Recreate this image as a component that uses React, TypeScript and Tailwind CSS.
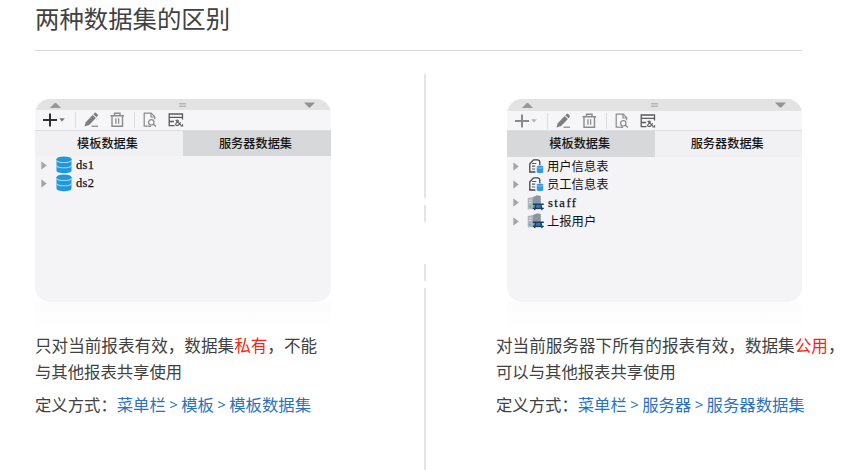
import React from "react";

const Plus = ({ muted }: { muted: boolean }) => (
  <svg width="16" height="16" viewBox="0 0 16 16" className={muted ? "text-[#8a8a8c]" : "text-[#303030]"}>
    <path d="M8 1.5V14.5M1 8H15" stroke="currentColor" strokeWidth="2" fill="none" />
  </svg>
);

const Caret = ({ muted }: { muted: boolean }) => (
  <svg width="6" height="4" viewBox="0 0 6 4" className={muted ? "text-[#b5b5b7]" : "text-[#77777a]"}>
    <path d="M0.3 0.3H5.7L3 3.8Z" fill="currentColor" />
  </svg>
);

const Pencil = () => (
  <svg width="15" height="16" viewBox="0 0 15 16">
    <path d="M0.5 14.4L1.8 10.2L8.6 3L11.9 5.9L5.2 13Z" fill="#7e7e80" />
    <path d="M9.3 2.2L10.5 0.9Q11.3 0.3 12.1 1L13.6 2.4Q14.3 3.1 13.7 3.9L12.6 5.2Z" fill="#7e7e80" />
    <path d="M7.5 14.2H14" stroke="#9a9a9c" strokeWidth="1.5" />
  </svg>
);

const Trash = () => (
  <svg width="15" height="16" viewBox="0 0 15 16" fill="none" stroke="#8b8b8d">
    <path d="M0.5 3.7H14M4.5 3.4V1.3H10V3.4M2 3.8V14.3H12.5V3.8" strokeWidth="1.4" />
    <path d="M5.9 6.2V11.8M8.6 6.2V11.8" strokeWidth="1.3" />
  </svg>
);

const Preview = () => (
  <svg width="14" height="16" viewBox="0 0 14 16" fill="none" stroke="#8b8b8d" strokeWidth="1.2">
    <path d="M5.4 14.2H1.2V1.2H8.2L11.7 4.7V7.2M8 1.4V5H11.7" />
    <circle cx="8.3" cy="10.3" r="2.7" />
    <path d="M10.3 12.3L12.9 14.6M5.5 14.2H8" strokeWidth="1.4" />
  </svg>
);

const TableEdit = () => (
  <svg width="16" height="16" viewBox="0 0 16 16" fill="none" stroke="#5a5a5c" strokeWidth="1.3">
    <path d="M6.6 13.6H1.2V2H14.5V7.5M1.2 5.3H14.5M1.2 9.5H6" />
    <path d="M7.6 8.2L13.2 13.4M7.8 13.2C6.9 11.6 8.4 10.8 10.2 9.6C10.8 8.6 9.4 7.4 8.4 8.4M8 13.2C9.6 14.2 11.8 12.6 12.6 10.2" strokeWidth="1.1" />
    <path d="M12.2 14.6H15.1V11.8Z" fill="#5a5a5c" stroke="none" />
  </svg>
);

const Database = () => (
  <svg width="16" height="18" viewBox="0 0 16 18">
    <path d="M0.5 3.2V14.6C0.5 18.2 15.5 18.2 15.5 14.6V3.2Z" fill="#1f98dc" />
    <ellipse cx="8" cy="3.2" rx="7.5" ry="2.7" fill="#1f98dc" />
    <path d="M0.5 4.4C2 7.2 14 7.2 15.5 4.4M0.5 9.4C2 12.5 14 12.5 15.5 9.4" fill="none" stroke="#a5d6f2" strokeWidth="1.1" />
  </svg>
);

const SheetData = () => (
  <svg width="16" height="16" viewBox="0 0 16 16">
    <path d="M7.4 14H1.8V5.8L5.6 1.8H9.8Q11.6 2 11.8 3.6V7" fill="#f7f7f9" stroke="#424346" strokeWidth="1.3" />
    <path d="M4 5.5H8.2M4 8.2H7.2M4 11H7.2" stroke="#5b5c60" strokeWidth="1.2" />
    <path d="M8.8 8.2Q11.9 6.6 15.2 8.2V14.4Q11.9 16 8.8 14.4Z" fill="#329be9" />
    <path d="M9 9.6Q12 11 15 9.6" fill="none" stroke="#8dccf7" strokeWidth="0.8" />
  </svg>
);

const ServerData = () => (
  <svg width="17" height="16" viewBox="0 0 17 16">
    <path d="M0.7 3L6 1.9V14.2H0.7Z" fill="#adb5bd" />
    <path d="M6 1.9L10 0.2L13.8 0.9V14.2H6Z" fill="#8b959e" />
    <path d="M1.8 5.2H4.6M1.8 7.6H4.6" stroke="#dfe4e8" strokeWidth="0.9" />
    <circle cx="3" cy="11.4" r="0.9" fill="#48b4ad" />
    <path d="M9.2 9.6H13.6L14.6 13.6H8.2Z" fill="#347db5" />
    <path d="M5.8 9.2H16.8M5.8 13.4H16.8M8.9 9.2L7.6 15.2M13.8 9.2L15 15.2" stroke="#173f69" strokeWidth="1.4" />
  </svg>
);

const Strip = ({ server }: { server: boolean }) => (
  <div className={`flex shrink-0 items-center justify-between bg-[#e3e3e4] pr-4 pl-[15px] ${server ? "h-[12px]" : "h-[11px]"}`}>
    <svg width="11" height="6" viewBox="0 0 11 6">
      <path d="M0 6L4.8 1H6.2L11 6Z" fill="#98989a" />
    </svg>
    <span className="h-1 w-[7px] border-y border-[#b4b4b6] bg-[#cfcfd1]" />
    <svg width="11" height="6" viewBox="0 0 11 6">
      <path d="M0 0.5H11L6.2 5.5H4.8Z" fill="#939395" />
    </svg>
  </div>
);

const Toolbar = ({ muted }: { muted: boolean }) => (
  <div className={`flex shrink-0 items-center bg-[#f6f6f8] pl-[7px] ${muted ? "h-[19px]" : "h-[20px]"}`}>
    <Plus muted={muted} />
    <div className="ml-px flex">
      <Caret muted={muted} />
    </div>
    <span className="ml-[10px] h-4 w-px bg-[#dcdcde]" />
    <div className="ml-2 flex">
      <Pencil />
    </div>
    <div className="ml-[11px] flex">
      <Trash />
    </div>
    <span className="ml-[9px] h-4 w-px bg-[#dcdcde]" />
    <div className="ml-[8px] flex">
      <Preview />
    </div>
    <div className="ml-[11px] flex">
      <TableEdit />
    </div>
  </div>
);

type Item = { label: string; icon: React.ReactNode; latin?: string };

const Panel = ({ items, server = false }: { items: Item[]; server?: boolean }) => (
  <div
    className={`flex h-[203px] flex-col overflow-hidden rounded-[15px] bg-[#f4f4f7] ${server ? "w-[295px]" : "w-[296px]"}`}
  >
    <Strip server={server} />
    <Toolbar muted={server} />
    <div
      className={`grid shrink-0 grid-cols-2 border-t border-[#dddddf] text-center text-[12.2px] font-medium text-[#161616] ${server ? "h-[27px] leading-[25px]" : "h-[26px] leading-[24px]"}`}
    >
      <span className={server ? "bg-[#d7d8da] pr-[2px]" : "bg-[#f1f1f3] pr-[3px]"}>模板数据集</span>
      <span className={server ? "bg-[#f1f1f3] pr-[2px]" : "bg-[#d7d8da] pr-[3px]"}>服务器数据集</span>
    </div>
    <ul>
      {items.map((item) => (
        <li key={item.label} className="flex h-[18.3px] items-center pl-[5.5px]">
          <svg width="6" height="9" viewBox="0 0 6 9">
            <path d="M0.3 0.3L5.8 4.5L0.3 8.7Z" fill="#a6a6a8" />
          </svg>
          <span className="ml-[8.5px] flex w-[17px] justify-center">{item.icon}</span>
          <span
            className={
              item.latin
                ? `ml-[4px] font-['Liberation_Serif',serif] text-[12.5px] leading-[18px] text-[#111] [-webkit-text-stroke:0.25px_#111] ${item.latin}`
                : "ml-[3px] text-[12.3px] leading-[18px] text-[#111]"
            }
          >
            {item.label}
          </span>
        </li>
      ))}
    </ul>
  </div>
);

const Route = ({ steps }: { steps: string[] }) => (
  <p className="mt-[7px] flex h-[26px] text-[16.35px] leading-[26px] whitespace-nowrap">
    <span>定义方式：</span>
    <span className="flex text-[#2a73b8]">
      {steps.map((step, i) => (
        <React.Fragment key={step}>
          {i > 0 && <span className="w-[15.4px] text-center font-['Open_Sans',sans-serif] text-[15px]">&gt;</span>}
          <span>{step}</span>
        </React.Fragment>
      ))}
    </span>
  </p>
);

export default function App() {
  return (
    <main className="flex h-[470px] w-[843px] flex-col overflow-hidden bg-white font-['Noto_Sans_CJK_SC',sans-serif] text-[#414141]">
      <header className="ml-[35px] h-[51px] w-[767px] border-b border-[#d6d6d6]">
        <h1 className="pt-px text-[24.4px] leading-[34px] font-normal">两种数据集的区别</h1>
      </header>
      <div className="flex flex-1">
        <section className="ml-[35px] w-[389px] pt-12">
          <Panel
            items={[
              { label: "ds1", icon: <Database />, latin: "tracking-[0.3px]" },
              { label: "ds2", icon: <Database />, latin: "tracking-[0.3px]" },
            ]}
          />
          <div className="h-[31px] w-[296px] bg-linear-to-b from-[#fcfcfd] to-white" />
          <p className="text-[16.6px] leading-[25px] whitespace-nowrap">
            只对当前报表有效，数据集<span className="text-[#f02818]">私有</span>，不能
          </p>
          <p className="text-[16.35px] leading-[26px] whitespace-nowrap">与其他报表共享使用</p>
          <Route steps={["菜单栏", "模板", "模板数据集"]} />
        </section>
        <div className="flex w-[2px] flex-col pt-[23px]">
          <span className="h-[124px] bg-[#e4e4e4]" />
          <span className="mt-[7px] h-[17px] bg-[#e4e4e4]" />
          <span className="mt-[42px] h-[17px] bg-[#e4e4e4]" />
          <span className="mt-[7px] flex-1 bg-[#e4e4e4]" />
        </div>
        <section className="ml-[70px] w-[347px] pt-12">
          <div className="pl-[11px]">
            <Panel
              server
              items={[
                { label: "用户信息表", icon: <SheetData /> },
                { label: "员工信息表", icon: <SheetData /> },
                { label: "staff", icon: <ServerData />, latin: "tracking-[1.5px]" },
                { label: "上报用户", icon: <ServerData /> },
              ]}
            />
            <div className="h-[31px] w-[295px] bg-linear-to-b from-[#fcfcfd] to-white" />
          </div>
          <p className="text-[16.6px] leading-[25px] whitespace-nowrap">
            对当前服务器下所有的报表有效，数据集<span className="text-[#f02818]">公用</span>，
          </p>
          <p className="text-[16.35px] leading-[26px] whitespace-nowrap">可以与其他报表共享使用</p>
          <Route steps={["菜单栏", "服务器", "服务器数据集"]} />
        </section>
      </div>
    </main>
  );
}
